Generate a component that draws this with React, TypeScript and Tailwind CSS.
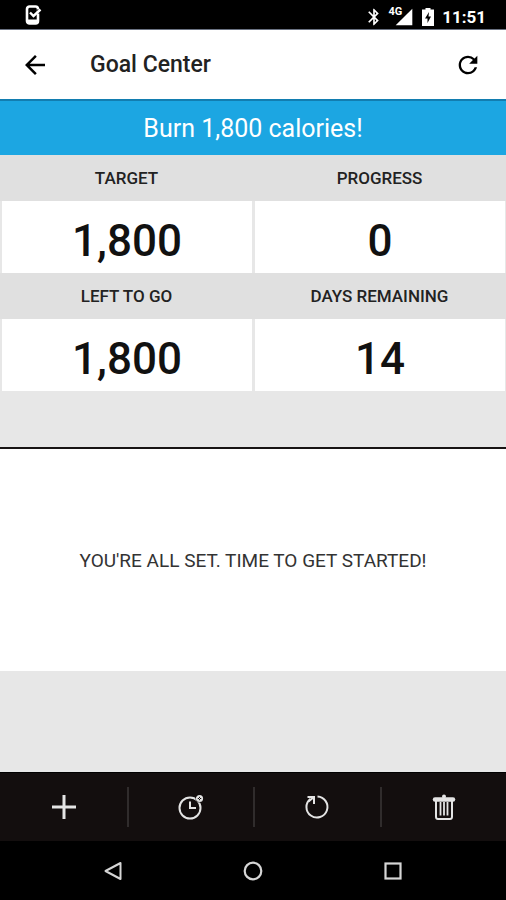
import { MdArrowBack, MdBluetooth, MdRefresh, MdSignalCellular4Bar } from 'react-icons/md'

const stats = [
  { label: 'TARGET', value: '1,800' },
  { label: 'PROGRESS', value: '0' },
  { label: 'LEFT TO GO', value: '1,800' },
  { label: 'DAYS REMAINING', value: '14' },
]

function StatusBar() {
  return (
    <div className="flex h-[29px] items-center justify-between bg-black pl-6 pr-5 text-white">
      <svg className="h-5 w-[18px]" viewBox="0 0 18 20" fill="none">
        <rect x="3" y="1.5" width="11" height="17" rx="2.5" stroke="#fff" strokeWidth="2.6" />
        <path d="M3 14.500h11v4H3z" fill="#fff" />
        <path d="M12.500 4.500h4v4h-4z" fill="#000" />
        <path d="M6 7.500l3.500 3.500L16.500 4.500" stroke="#fff" strokeWidth="2.400" />
      </svg>
      <div className="flex items-center">
        <MdBluetooth className="mt-1 size-5 stroke-white" />
        <div className="ml-1 mt-1 flex">
          <span className="text-[11px] leading-[10px] font-bold">4G</span>
          <MdSignalCellular4Bar className="-ml-2 size-5" />
        </div>
        <svg className="ml-2 mt-1 h-[18px] w-3" viewBox="0 0 12 18">
          <path d="M3.500 0h5v1.500H12V18H0V1.500h3.500z" fill="#fff" />
          <path d="M7 4L3 10.500h2.500V15L9 8.500H6.500z" fill="#000" />
        </svg>
        <span className="ml-2 mt-1 text-[17px] leading-5 font-bold">11:51</span>
      </div>
    </div>
  )
}

function Header() {
  return (
    <header className="flex h-[70px] items-center border-t border-gray-500 bg-white px-6 text-black">
      <button aria-label="Back">
        <MdArrowBack className="-ml-1 size-[30px]" />
      </button>
      <h1 className="ml-10 flex-1 pt-px text-[23px] leading-7 font-medium text-[#222]">Goal Center</h1>
      <button aria-label="Refresh">
        <MdRefresh className="size-7" />
      </button>
    </header>
  )
}

function Stat({ label, value }: { label: string; value: string }) {
  return (
    <div className="text-center">
      <h3 className="bg-[#e0e0e0] pt-px text-[17px] leading-[45px] font-medium text-[#222]">{label}</h3>
      <div className="ml-0.5 mr-px bg-white pt-2 text-[44px] leading-[64px] font-medium text-[#111]">{value}</div>
    </div>
  )
}

function Toolbar() {
  return (
    <div className="grid h-[69px] grid-cols-4 items-center border-t border-black bg-[#130e0e] text-[#e4e4e4]">
      <button aria-label="Add" className="flex h-10 items-center justify-center border-l-2 border-transparent">
        <svg className="size-7" viewBox="0 0 28 28" stroke="currentColor" strokeWidth="3">
          <path d="M14 2v24M2 14h24" />
        </svg>
      </button>
      <button aria-label="History" className="flex h-10 items-center justify-center border-l-2 border-[#302c2c]">
        <svg className="size-7" viewBox="0 0 28 28" fill="none" stroke="currentColor" strokeWidth="2">
          <circle cx="13" cy="15" r="10.500" />
          <path d="M13 8.500V15h6" />
          <circle cx="22.500" cy="5.500" r="4" fill="#130e0e" stroke="none" />
          <circle cx="22.500" cy="5.500" r="2.700" strokeWidth="1.800" />
          <path d="M21 4l3 3M24 4l-3 3" strokeWidth="1" />
        </svg>
      </button>
      <button aria-label="Reset" className="flex h-10 items-center justify-center border-l-2 border-[#302c2c]">
        <svg className="size-7" viewBox="0 0 28 28" fill="none" stroke="currentColor" strokeWidth="2">
          <path d="M14.500 3.500A10.500 10.500 0 1 1 7.500 5.700" />
          <path d="M4.500 4H11v7M5.500 8.500L11 4" />
        </svg>
      </button>
      <button aria-label="Delete" className="flex h-10 items-center justify-center border-l-2 border-[#302c2c]">
        <svg className="size-7" viewBox="0 0 28 28" fill="none" stroke="currentColor" strokeWidth="2">
          <path d="M5 6.500h18" strokeWidth="4.500" strokeLinecap="round" />
          <circle cx="14" cy="3.500" r="2" fill="currentColor" stroke="none" />
          <path d="M6 8v16q.1 2 2 2h12q1.900 0 2-2V8" />
          <path d="M10.500 9v13.500M14 9v13.500M17.500 9v13.500" strokeWidth="1.800" />
        </svg>
      </button>
    </div>
  )
}

function NavBar() {
  return (
    <nav className="flex h-[59px] items-center justify-center gap-[120px] bg-black text-[#d6d6d6]">
      <button aria-label="Navigate back">
        <svg className="size-5" viewBox="0 0 20 20" fill="none" stroke="currentColor" strokeWidth="2">
          <path d="M17.500 2v16L2.500 10z" strokeLinejoin="round" />
        </svg>
      </button>
      <button aria-label="Home">
        <svg className="size-5" viewBox="0 0 20 20" fill="none" stroke="currentColor" strokeWidth="2.200">
          <circle cx="10" cy="10" r="8.300" />
        </svg>
      </button>
      <button aria-label="Recent apps">
        <svg className="size-5" viewBox="0 0 20 20" fill="none" stroke="currentColor" strokeWidth="2.200">
          <rect x="2.500" y="2.500" width="15" height="15" />
        </svg>
      </button>
    </nav>
  )
}

function App() {
  return (
    <div className="flex min-h-screen flex-col bg-[#e7e7e7] font-[Roboto,sans-serif]">
      <StatusBar />
      <Header />
      <h2 className="border-t-2 border-[#127db0] bg-[#1ca6e2] pt-0.5 text-center text-[25px] leading-[52px] text-white">
        Burn 1,800 calories!
      </h2>
      <section className="grid grid-cols-2 pb-14">
        {stats.map((stat) => (
          <Stat key={stat.label} label={stat.label} value={stat.value} />
        ))}
      </section>
      <main className="flex flex-1 items-center justify-center border-t-2 border-[#181414] bg-white pt-0.5 text-[19px] text-[#333]">
        <p>YOU'RE ALL SET. TIME TO GET STARTED!</p>
      </main>
      <div className="h-[101px]" />
      <Toolbar />
      <NavBar />
    </div>
  )
}

export default App
